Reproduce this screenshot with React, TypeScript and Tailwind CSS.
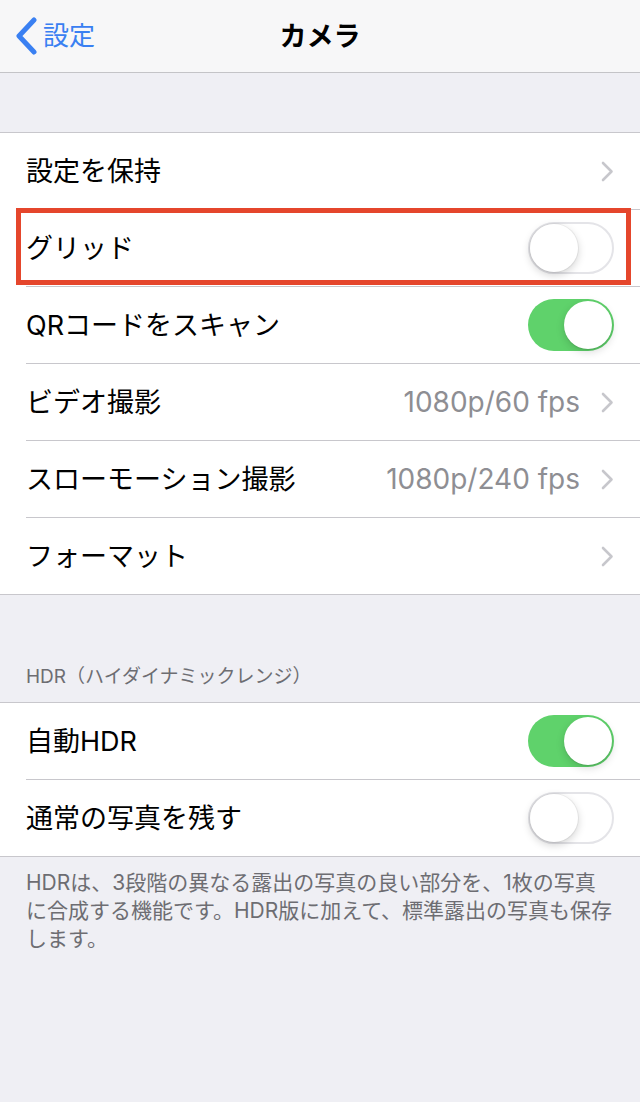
const FONT = "font-['Inter','Noto_Sans_CJK_JP',sans-serif]";

function Chevron() {
  return (
    <svg width="13" height="21" viewBox="0 0 13 21" className="shrink-0">
      <path
        d="M2 2 L10.5 10.5 L2 19"
        fill="none"
        stroke="#c7c7cc"
        strokeWidth="2.6"
        strokeLinecap="round"
        strokeLinejoin="round"
      />
    </svg>
  );
}

function Toggle({ on }: { on: boolean }) {
  if (on) {
    return (
      <div className="flex h-[52px] w-[86px] shrink-0 items-center justify-end rounded-full bg-[#5fd26b] p-[2px]">
        <div className="h-[48px] w-[48px] rounded-full bg-white shadow-[0_3px_8px_rgba(0,0,0,0.15),0_1px_1px_rgba(0,0,0,0.1)]" />
      </div>
    );
  }
  return (
    <div className="flex h-[52px] w-[86px] shrink-0 items-center justify-start rounded-full border-2 border-[#e4e4e8] bg-white">
      <div className="h-[48px] w-[48px] rounded-full bg-white shadow-[0_3px_8px_rgba(0,0,0,0.18),0_0_0_1px_rgba(0,0,0,0.05)]" />
    </div>
  );
}

type Row = {
  label: string;
  value?: string;
  toggle?: boolean;
  chevron?: boolean;
  marked?: boolean;
};

const CAMERA_ROWS: Row[] = [
  { label: "設定を保持", chevron: true },
  { label: "グリッド", toggle: false, marked: true },
  { label: "QRコードをスキャン", toggle: true },
  { label: "ビデオ撮影", value: "1080p/60 fps", chevron: true },
  { label: "スローモーション撮影", value: "1080p/240 fps", chevron: true },
  { label: "フォーマット", chevron: true },
];

const HDR_ROWS: Row[] = [
  { label: "自動HDR", toggle: true },
  { label: "通常の写真を残す", toggle: false },
];

function SettingsRow({ row, last }: { row: Row; last: boolean }) {
  return (
    <div className="relative pl-[26px]">
      <div
        className={`flex items-center justify-between pr-[26px] ${
          last ? "h-[76px]" : "h-[77px] border-b border-[#c8c7cc]"
        }`}
      >
        <span className="text-[27px] leading-none text-black">{row.label}</span>
        <div className="flex items-center gap-[21px]">
          {row.value && (
            <span className="text-[28px] leading-none text-[#8e8e93]">{row.value}</span>
          )}
          {row.chevron && <Chevron />}
          {row.toggle !== undefined && <Toggle on={row.toggle} />}
        </div>
      </div>
      {row.marked && (
        <div className="pointer-events-none absolute top-[-2px] left-[16px] right-[9px] h-[77px] border-[5px] border-[#e5462c]" />
      )}
    </div>
  );
}

function Section({ rows }: { rows: Row[] }) {
  return (
    <div className="border-y border-[#c8c7cc] bg-white">
      {rows.map((row, i) => (
        <SettingsRow key={row.label} row={row} last={i === rows.length - 1} />
      ))}
    </div>
  );
}

export default function App() {
  return (
    <div className={`${FONT} min-h-[1102px] w-[640px] bg-[#efeff4]`}>
      {/* nav bar */}
      <div className="relative flex h-[73px] items-center border-b border-[#c4c4c7] bg-[#f7f7f8]">
        <div className="flex items-center gap-[6px] pl-[15px]">
          <svg width="22" height="38" viewBox="0 0 22 38">
            <path
              d="M19 3 L4 19 L19 35"
              fill="none"
              stroke="#3a80f2"
              strokeWidth="5"
              strokeLinecap="round"
              strokeLinejoin="round"
            />
          </svg>
          <span className="text-[26px] leading-none text-[#3a80f2]">設定</span>
        </div>
        <span className="absolute left-1/2 -translate-x-1/2 text-[27px] font-bold leading-none text-black">
          カメラ
        </span>
      </div>

      <div className="h-[59px]" />
      <Section rows={CAMERA_ROWS} />

      <div className="px-[26px] pt-[68px] pb-[11px] text-[19px] leading-[28px] text-[#6d6d72]">
        HDR（ハイダイナミックレンジ）
      </div>
      <Section rows={HDR_ROWS} />

      <p className="whitespace-nowrap px-[26px] pt-[12px] text-[21px] leading-[28px] text-[#6d6d72]">
        HDRは、3段階の異なる露出の写真の良い部分を、1枚の写真
        <br />
        に合成する機能です。HDR版に加えて、標準露出の写真も保存
        <br />
        します。
      </p>
    </div>
  );
}
